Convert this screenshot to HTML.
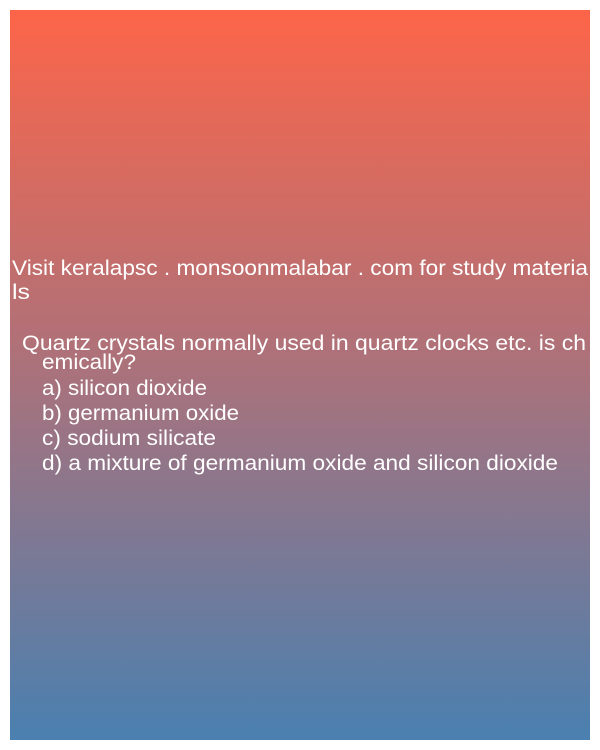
<!DOCTYPE html>
<html><head><meta charset="utf-8"><style>
html,body{margin:0;padding:0;background:#fff;width:600px;height:750px;overflow:hidden}
svg{display:block}
text{font-family:"Liberation Sans","DejaVu Sans",sans-serif;font-size:21px;fill:#fff}
</style></head><body>
<svg width="600" height="750" xmlns="http://www.w3.org/2000/svg">
<defs><linearGradient id="g" x1="0" y1="0" x2="0" y2="1">
<stop offset="0" stop-color="#fd6549"/>
<stop offset="0.5" stop-color="#a9727c"/>
<stop offset="1" stop-color="#4a80b0"/>
</linearGradient></defs>
<rect x="10" y="10" width="580" height="730" fill="url(#g)"/>
<text x="12" y="275" textLength="576" lengthAdjust="spacingAndGlyphs">Visit keralapsc . monsoonmalabar . com for study materia</text>
<text x="12" y="299" textLength="18" lengthAdjust="spacingAndGlyphs">ls</text>
<text x="22" y="350" textLength="564" lengthAdjust="spacingAndGlyphs">Quartz crystals normally used in quartz clocks etc. is ch</text>
<text x="42" y="369" textLength="94" lengthAdjust="spacingAndGlyphs">emically?</text>
<text x="42" y="395" textLength="165" lengthAdjust="spacingAndGlyphs">a) silicon dioxide</text>
<text x="42" y="420" textLength="197" lengthAdjust="spacingAndGlyphs">b) germanium oxide</text>
<text x="42" y="445" textLength="174" lengthAdjust="spacingAndGlyphs">c) sodium silicate</text>
<text x="42" y="470" textLength="516" lengthAdjust="spacingAndGlyphs">d) a mixture of germanium oxide and silicon dioxide</text>
</svg>
</body></html>
